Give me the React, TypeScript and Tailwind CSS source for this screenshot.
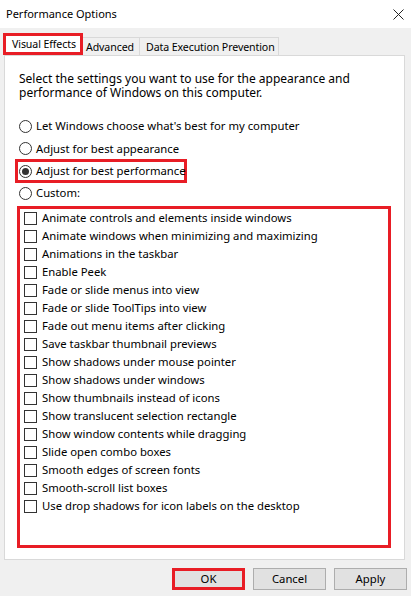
import React from 'react';

const effects = [
    "Animate controls and elements inside windows",
    "Animate windows when minimizing and maximizing",
    "Animations in the taskbar",
    "Enable Peek",
    "Fade or slide menus into view",
    "Fade or slide ToolTips into view",
    "Fade out menu items after clicking",
    "Save taskbar thumbnail previews",
    "Show shadows under mouse pointer",
    "Show shadows under windows",
    "Show thumbnails instead of icons",
    "Show translucent selection rectangle",
    "Show window contents while dragging",
    "Slide open combo boxes",
    "Smooth edges of screen fonts",
    "Smooth-scroll list boxes",
    "Use drop shadows for icon labels on the desktop",
];

const Radio = ({ label, checked }: { label: string; checked?: boolean }) => (
    <div className="flex items-center gap-[4px]">
        <span className="w-[13px] h-[13px] rounded-full border border-[#333333] bg-white flex items-center justify-center shrink-0">
            {checked && <span className="w-[7px] h-[7px] rounded-full bg-[#333333]" />}
        </span>
        <span className="whitespace-nowrap">{label}</span>
    </div>
);

const PerformanceOptions = () => {
    return (
        <div
            className="w-[411px] h-[596px] bg-[#f0f0f0] flex flex-col text-[11.3px] text-black leading-[14px]"
            style={{ fontFamily: '"Noto Sans", "Open Sans", sans-serif' }}
        >
            {/* title bar */}
            <div className="h-[28px] bg-white flex items-center justify-between pl-[6px] pr-[7px] shrink-0">
                <span className="text-[11px]">Performance Options</span>
                <svg width="11" height="11" viewBox="0 0 11 11" className="text-[#222]">
                    <path d="M0.5 0.5 L10.5 10.5 M10.5 0.5 L0.5 10.5" stroke="currentColor" strokeWidth="1" />
                </svg>
            </div>

            {/* tabs */}
            <div className="flex items-end pl-[3px] mt-[5px] h-[22px] shrink-0 text-[10.6px] tracking-[-0.1px]">
                <div className="h-[22px] w-[80px] border-[3px] border-[#e81d25] bg-white flex items-center pl-[6px] whitespace-nowrap relative z-10">
                    Visual Effects
                </div>
                <div className="h-[18px] w-[57px] border border-[#d9d9d9] border-b-0 border-l-0 flex items-center pl-[3px] whitespace-nowrap">
                    Advanced
                </div>
                <div className="h-[18px] w-[139px] border border-[#d9d9d9] border-b-0 border-l-0 flex items-center pl-[6px] whitespace-nowrap">
                    Data Execution Prevention
                </div>
            </div>

            {/* panel */}
            <div className="ml-[4px] mr-[6px] h-[505px] border border-[#d9d9d9] bg-white pl-[14px] pr-[12px] pt-[16px] flex flex-col shrink-0">
                <div className="leading-[14px] text-[12px]">
                    <div>Select the settings you want to use for the appearance and</div>
                    <div>performance of Windows on this computer.</div>
                </div>

                <div className="flex flex-col mt-[15px]">
                    <div className="h-[22px] flex items-center">
                        <Radio label="Let Windows choose what's best for my computer" />
                    </div>
                    <div className="h-[23px] flex items-center">
                        <Radio label="Adjust for best appearance" />
                    </div>
                    <div className="h-[22px] flex items-center">
                        <div className="-ml-[4px] w-[172px] border-[3px] border-[#e81d25] h-[24px] pl-[1px] flex items-center">
                            <Radio label="Adjust for best performance" checked />
                        </div>
                    </div>
                    <div className="h-[22px] flex items-center">
                        <Radio label="Custom:" />
                    </div>
                </div>

                <div className="mt-[2px] -ml-[2px] w-[374px] h-[342px] border-[3px] border-[#e81d25] pl-[4px] flex flex-col">
                    {effects.map((label) => (
                        <div key={label} className="h-[18px] flex items-center gap-[5px] shrink-0">
                            <span className="w-[13px] h-[13px] border border-[#333333] bg-white shrink-0" />
                            <span className="whitespace-nowrap">{label}</span>
                        </div>
                    ))}
                </div>
            </div>

            {/* buttons */}
            <div className="flex justify-end gap-[8px] pr-[4px] mt-[8px]">
                <button className="w-[73px] h-[22px] border-[3px] border-[#e81d25] bg-[#e1e1e1] flex items-center justify-center">
                    OK
                </button>
                <button className="w-[73px] h-[22px] border border-[#adadad] bg-[#e1e1e1] flex items-center justify-center">
                    Cancel
                </button>
                <button className="w-[73px] h-[22px] border border-[#adadad] bg-[#e1e1e1] flex items-center justify-center">
                    Apply
                </button>
            </div>
        </div>
    );
};

export default function App() {
    return <PerformanceOptions />;
}
